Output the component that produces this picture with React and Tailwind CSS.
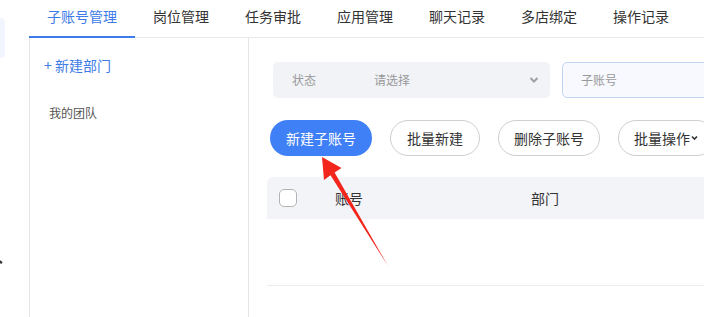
import React from "react"

const font = { fontFamily: '"Noto Sans CJK SC", "Noto Sans", sans-serif' }

export default function App() {
  const tabs = ["子账号管理", "岗位管理", "任务审批", "应用管理", "聊天记录", "多店绑定", "操作记录"]

  return (
    <div className="relative w-[704px] h-[317px] overflow-hidden bg-white flex" style={font}>
      {/* far left rail */}
      <div className="w-[29px] shrink-0 relative">
        <div className="mt-[18px] w-[5px] h-[40px] rounded-r-[4px] bg-[#f1f5fd]" />
        <div className="absolute left-0 top-[261px] w-[3px] h-[3px] border-t-2 border-r-2 border-[#333] -rotate-45 -translate-x-[1px]" />
      </div>

      <div className="flex-1 flex flex-col min-w-0">
        {/* tabs */}
        <div className="h-[38px] shrink-0 flex border-b border-[#e8e8e8]">
          {tabs.map((t, i) => (
            <div
              key={t}
              className={`px-[18px] flex items-center pb-[3px] text-[14px] whitespace-nowrap border-b-2 -mb-px ${
                i === 0 ? "text-[#3d7be8] border-[#3d7be8]" : "text-[#333] border-transparent"
              }`}
            >
              {t}
            </div>
          ))}
        </div>

        <div className="flex-1 flex min-h-0">
          {/* department panel */}
          <div className="w-[220px] shrink-0 border-l border-r border-[#e5e5e5]">
            <div className="pl-[14px] pt-[16px] text-[14px] text-[#3d7be8] leading-[22px]">+ 新建部门</div>
            <div className="pl-[19px] pt-[28px] text-[12px] text-[#555] leading-[18px]">我的团队</div>
          </div>

          {/* main */}
          <div className="flex-1 min-w-0 pl-[18px] pt-[24px]">
            <div className="flex gap-[12px] ml-[6px]">
              <div className="w-[277px] h-[36px] shrink-0 rounded-[5px] bg-[#f2f3f7] flex items-center pl-[19px] pr-[11px] text-[12px] text-[#999]">
                <span className="w-[82px]">状态</span>
                <span className="flex-1">请选择</span>
                <svg width="10" height="8" viewBox="0 0 10 8">
                  <path d="M1.5 2 L5 5.5 L8.5 2" fill="none" stroke="#a0a0a0" strokeWidth="2" />
                </svg>
              </div>
              <div className="w-[200px] h-[36px] shrink-0 rounded-[5px] border border-[#c3d3f1] bg-[#f7f9fe] flex items-center pl-[18px] text-[12px] text-[#999]">
                子账号
              </div>
            </div>

            <div className="flex gap-[18px] mt-[22px] ml-[3px]">
              <div className="h-[36px] px-[16px] shrink-0 rounded-full bg-[#3f80f6] text-white text-[14px] flex items-center">
                新建子账号
              </div>
              <div className="h-[36px] px-[16px] shrink-0 rounded-full border border-[#cfcfcf] text-[#333] text-[14px] flex items-center">
                批量新建
              </div>
              <div className="h-[36px] px-[15px] shrink-0 rounded-full border border-[#cfcfcf] text-[#333] text-[14px] flex items-center">
                删除子账号
              </div>
              <div className="h-[36px] pl-[15px] pr-[16px] shrink-0 rounded-full border border-[#cfcfcf] text-[#333] text-[14px] flex items-center">
                批量操作
                <svg width="7" height="6" viewBox="0 0 7 6" className="ml-[1px]">
                  <path d="M1 1.5 L3.5 4 L6 1.5" fill="none" stroke="#333" strokeWidth="1.6" />
                </svg>
              </div>
            </div>

            <div className="mt-[21px] w-[460px]">
              <div className="h-[42px] bg-[#f3f4f8] rounded-t-[6px] flex items-center text-[14px] text-[#333]">
                <div className="ml-[12px] w-[18px] h-[18px] rounded-[5px] border border-[#b3b3b3] bg-white" />
                <span className="ml-[38px] w-[196px]">账号</span>
                <span>部门</span>
              </div>
              <div className="h-[67px] border-b border-[#ececec]" />
            </div>
          </div>
        </div>
      </div>

      {/* red annotation arrow */}
      <svg className="absolute inset-0 pointer-events-none" width="704" height="317" viewBox="0 0 704 317">
        <polygon
          points="322,157 341.5,168 334.6,172.6 388,266 330.5,175.2 324,180"
          fill="#f2261c"
        />
      </svg>
    </div>
  )
}
